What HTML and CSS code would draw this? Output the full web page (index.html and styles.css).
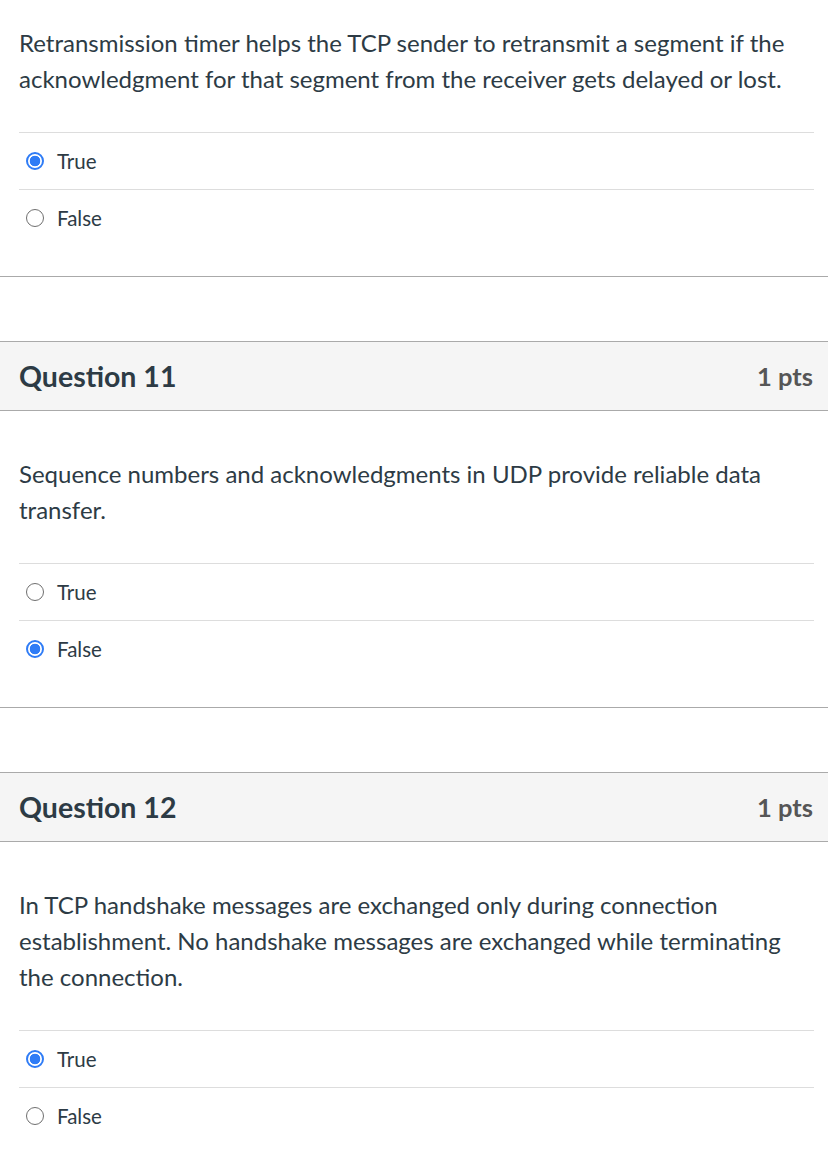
FILE: index.html
```html
<!DOCTYPE html>
<html lang="en">
<head>
<meta charset="utf-8">
<title>Quiz</title>
<link rel="stylesheet" href="styles.css">
</head>
<body>
<div class="question first">
  <div class="q-body">
    <p class="q-text">Retransmission timer helps the TCP sender to retransmit a segment if the acknowledgment for that segment from the receiver gets delayed or lost.</p>
    <div class="answers">
      <div class="answer"><span class="radio checked"></span><span class="label">True</span></div>
      <div class="answer"><span class="radio"></span><span class="label">False</span></div>
    </div>
  </div>
</div>

<div class="question">
  <div class="q-header"><h2 class="q-title">Question 11</h2><span class="q-pts">1 pts</span></div>
  <div class="q-body">
    <p class="q-text">Sequence numbers and acknowledgments in UDP provide reliable data transfer.</p>
    <div class="answers">
      <div class="answer"><span class="radio"></span><span class="label">True</span></div>
      <div class="answer"><span class="radio checked"></span><span class="label">False</span></div>
    </div>
  </div>
</div>

<div class="question">
  <div class="q-header"><h2 class="q-title">Question 12</h2><span class="q-pts">1 pts</span></div>
  <div class="q-body">
    <p class="q-text">In TCP handshake messages are exchanged only during connection establishment. No handshake messages are exchanged while terminating the connection.</p>
    <div class="answers">
      <div class="answer"><span class="radio checked"></span><span class="label">True</span></div>
      <div class="answer"><span class="radio"></span><span class="label">False</span></div>
    </div>
  </div>
</div>
</body>
</html>
```

FILE: styles.css
```css
* { box-sizing: border-box; }
html, body { margin: 0; padding: 0; background: #fff; }
body {
  font-family: Lato, "Liberation Sans", sans-serif;
  color: #2d3b45;
  width: 828px;
  height: 1152px;
  overflow: hidden;
}
.question {
  border-bottom: 1px solid #aaaaaa;
  margin-bottom: 64px;
}
.q-header {
  height: 70px;
  background: #f5f5f5;
  border-top: 1px solid #aaaaaa;
  border-bottom: 1px solid #aaaaaa;
  display: flex;
  align-items: center;
  justify-content: space-between;
  padding: 0 15px 0 19px;
}
.q-title {
  margin: 0;
  font-size: 28.5px;
  font-weight: 700;
  color: #2d3b45;
}
.q-pts {
  font-size: 25.5px;
  font-weight: 700;
  color: #565656;
}
.q-body {
  padding: 45px 14px 30px 19px;
}
.first .q-body { padding-top: 25px; }
.q-text {
  margin: 0;
  font-size: 24px;
  line-height: 36px;
}
.answers { margin-top: 35px; }
.answer {
  height: 57px;
  border-top: 1px solid #dddddd;
  display: flex;
  align-items: center;
  padding-left: 7px;
  gap: 13px;
}
.radio {
  width: 18px;
  height: 18px;
  border-radius: 50%;
  border: 1.5px solid #6f6f6f;
  background: #fff;
  flex: none;
}
.radio.checked {
  border: 2px solid #2f7cf6;
  background: radial-gradient(circle, #2f7cf6 0 5px, #fff 5.6px);
}
.label {
  font-size: 20.5px;
  color: #2d3b45;
}
```
